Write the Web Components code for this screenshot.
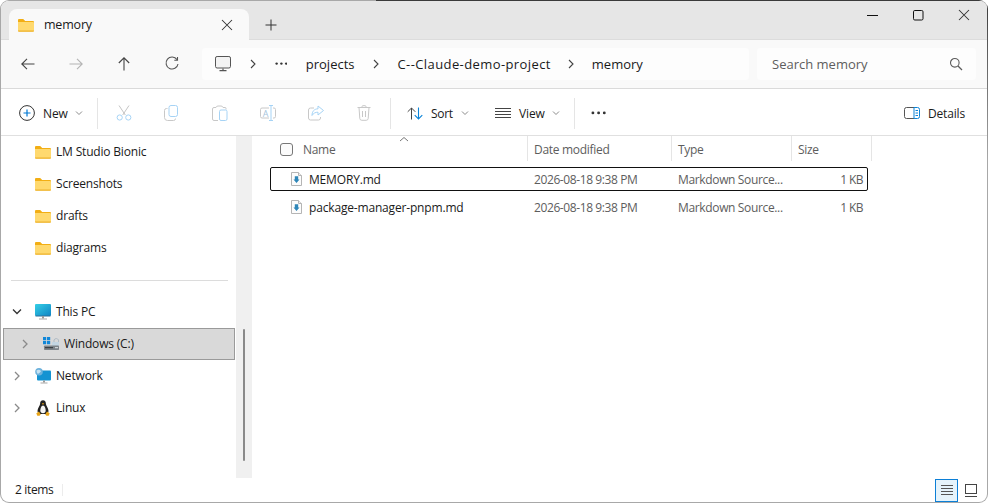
<!DOCTYPE html>
<html lang="en">
<head>
<meta charset="utf-8">
<title>memory</title>
<style>
    html, body { margin: 0; padding: 0; background: #fff; overflow: hidden; }
    body { font: 12px/16px "Open Sans", "Noto Sans", sans-serif; color: #1a1a1a; }
</style>
</head>
<body>
<fe-window>
    <fe-tabbar title-text="memory"></fe-tabbar>
    <fe-addressbar></fe-addressbar>
    <fe-toolbar></fe-toolbar>
    <fe-body>
        <fe-sidebar slot="side">
            <fe-nav-item icon="folder" sub>LM Studio Bionic</fe-nav-item>
            <fe-nav-item icon="folder" sub>Screenshots</fe-nav-item>
            <fe-nav-item icon="folder" sub>drafts</fe-nav-item>
            <fe-nav-item icon="folder" sub>diagrams</fe-nav-item>
            <fe-nav-sep></fe-nav-sep>
            <fe-nav-item icon="pc" chevron="open">This PC</fe-nav-item>
            <fe-nav-item icon="drive" chevron="closed" depth="1" selected>Windows (C:)</fe-nav-item>
            <fe-nav-item icon="network" chevron="closed">Network</fe-nav-item>
            <fe-nav-item icon="linux" chevron="closed">Linux</fe-nav-item>
        </fe-sidebar>
        <fe-filelist slot="main">
            <fe-file-row focused name="MEMORY.md"></fe-file-row>
            <fe-file-row name="package-manager-pnpm.md"></fe-file-row>
        </fe-filelist>
    </fe-body>
    <fe-statusbar></fe-statusbar>
</fe-window>

<script>
const html = String.raw;

// every icon is drawn on its own little canvas, w/h come from the viewBox
const ICONS = {
    folder: [16, 14, `<path d="M0 2a1 1 0 0 1 1-1h4.2l2 2H15a1 1 0 0 1 1 1v1H0z" fill="#f2ae14"/><path d="M0 4h15a1 1 0 0 1 1 1v7.5a1 1 0 0 1-1 1H1a1 1 0 0 1-1-1z" fill="#ffd96e"/><path d="M0 12.6h16v.2a1 1 0 0 1-1 1H1a1 1 0 0 1-1-1z" fill="#eeb22c"/>`],
    back: [16, 16, `<path d="M14.5 8H1.8M7 2.8 1.8 8 7 13.2" fill="none" stroke="#444" stroke-width="1.1"/>`],
    forward: [16, 16, `<path d="M1.5 8h12.7M9 2.8 14.2 8 9 13.2" fill="none" stroke="#b4b4b4" stroke-width="1.1"/>`],
    up: [16, 16, `<path d="M8 14.5V1.8M2.8 7 8 1.8 13.2 7" fill="none" stroke="#444" stroke-width="1.1"/>`],
    refresh: [16, 16, `<path d="M13 3.6A6 6 0 1 0 14 8" fill="none" stroke="#555" stroke-width="1.1"/><path d="M13.5 1v3.2h-3.2" fill="none" stroke="#555" stroke-width="1.1"/>`],
    monitor: [16, 16, `<rect x=".5" y=".5" width="15" height="11.5" rx="1.6" fill="#f3f3f3" stroke="#555"/><path d="M8 12.5v2M4.5 14.7h7" stroke="#555" stroke-width="1.2"/>`],
    search: [14, 14, `<circle cx="5.8" cy="5.8" r="4.3" fill="none" stroke="#5c5c5c" stroke-width="1.1"/><path d="m9 9 4 4" stroke="#5c5c5c" stroke-width="1.2"/>`],
    close: [12, 12, `<path d="m1 1 10 10M11 1 1 11" stroke="#333" stroke-width="1.05"/>`],
    plus: [12, 12, `<path d="M6 .5v11M.5 6h11" stroke="#333" stroke-width="1"/>`],
    min: [11, 11, `<path d="M0 5.5h11" stroke="#111" stroke-width="1"/>`],
    max: [11, 11, `<rect x=".5" y=".5" width="9.5" height="9.5" rx="1.3" fill="none" stroke="#111"/>`],
    chevron: [8, 10, `<path d="m2 1 4 4-4 4" fill="none" stroke="#444" stroke-width="1.1"/>`],
    caret: [8, 6, `<path d="m1 1.5 3 3 3-3" fill="none" stroke="#8a8a8a" stroke-width="1"/>`],
    newItem: [16, 16, `<circle cx="8" cy="8" r="7.4" fill="#fff" stroke="#333" stroke-width="1"/><path d="M8 4.5v7M4.5 8h7" stroke="#0078d4" stroke-width="1.2"/>`],
    cut: [16, 16, `<path d="M3 .5 9.3 10M13 .5 6.7 10" stroke="#c4c4c4" stroke-width="1" fill="none"/><circle cx="3.7" cy="12.5" r="2.6" fill="none" stroke="#a6d3f5"/><circle cx="12.3" cy="12.5" r="2.6" fill="none" stroke="#a6d3f5"/>`],
    copy: [16, 16, `<path d="M3.5 3.5h-1a2 2 0 0 0-2 2v7a3 3 0 0 0 3 3h6a2 2 0 0 0 2-2" fill="none" stroke="#c8c8c8"/><rect x="5" y=".5" width="8.5" height="11" rx="2" fill="#fff" stroke="#a6d3f5"/>`],
    paste: [16, 16, `<path d="M4 2.5H2a1.500 1.500 0 0 0-1.500 1.500v10a1.500 1.500 0 0 0 1.500 1.500h4M4 2.500a2 2 0 0 1 2-1.500h3a2 2 0 0 1 2 1.500" fill="none" stroke="#c8c8c8"/><path d="M11 2.500h2a1 1 0 0 1 1 1v1" fill="none" stroke="#c8c8c8"/><rect x="7.500" y="5" width="7.500" height="10.500" rx="1.500" fill="#fff" stroke="#a6d3f5"/>`],
    rename: [16, 16, `<path d="M9 3H2a1.500 1.500 0 0 0-1.500 1.500v7A1.500 1.500 0 0 0 2 13h7M13 3h1a1.500 1.500 0 0 1 1.500 1.500v7A1.500 1.500 0 0 1 14 13h-1" fill="none" stroke="#c8c8c8"/><path d="M9 .5h4M11 .5v15M9 15.500h4" stroke="#a6d3f5" fill="none"/><text x="5.500" y="11.500" text-anchor="middle" font-size="9" font-family="Open Sans, sans-serif" fill="#a6c4dc">A</text>`],
    share: [16, 16, `<path d="M6 3H2.500A2 2 0 0 0 .5 5v8a2 2 0 0 0 2 2h8a2 2 0 0 0 2-2v-1" fill="none" stroke="#c8c8c8"/><path d="M10 1v2.800C6 4 4 6.500 4 10.500 5.500 8 7.500 7.200 10 7.200V10l5.500-4.500z" fill="#fff" stroke="#a6d3f5"/>`],
    trash: [14, 16, `<path d="M.5 2.500h13M5 2.500V1.700A1 1 0 0 1 6 .7h2a1 1 0 0 1 1 1v.8M2 2.500l.8 11a2 2 0 0 0 2 1.800h4.400a2 2 0 0 0 2-1.800l.8-11M5.500 6v6M8.500 6v6" fill="none" stroke="#c8c8c8"/>`],
    sort: [17, 13, `<path d="M4.500 12.500V1M.7 4.800 4.500 1l3.800 3.800" fill="none" stroke="#444"/><path d="M11.500.5V12M7.700 8.200l3.800 3.800 3.800-3.800" fill="none" stroke="#0c84d8" stroke-width="1.100"/>`],
    view: [16, 11, `<path d="M0 .5h16M0 3.500h16M0 6.500h16M0 9.500h16" stroke="#444"/>`],
    dots: [16, 4, `<circle cx="2" cy="2" r="1.500" fill="#333"/><circle cx="8" cy="2" r="1.500" fill="#333"/><circle cx="14" cy="2" r="1.500" fill="#333"/>`],
    details: [16, 12, `<path d="M10 .5H2.500a2 2 0 0 0-2 2v7a2 2 0 0 0 2 2H10" fill="none" stroke="#555"/><path d="M10 .5h3.500a2 2 0 0 1 2 2v7a2 2 0 0 1-2 2H10z" fill="#fff" stroke="#0c84d8"/><path d="M11.500 3.500h2.500M11.500 6h2.500M11.500 8.500h2.500" stroke="#0c84d8"/>`],
    pc: [16, 16, `<defs><linearGradient id="scr" x1="0" y1="0" x2="1" y2="1"><stop offset="0" stop-color="#35cfe6"/><stop offset="1" stop-color="#0e84c4"/></linearGradient></defs><rect x="0" y="0" width="16" height="12" rx="1" fill="url(#scr)"/><path d="M.5 12h15" stroke="#2b6f9a"/><path d="M8 12v2.500" stroke="#9a9a9a" stroke-width="2"/><path d="M4 15h8" stroke="#a8a8a8" stroke-width="1.200"/>`],
    drive: [16, 14, `<path d="M0 0h3.200v3.200H0zM4 0h3.200v3.200H4zM0 4h3.200v3.200H0zM4 4h3.200v3.200H4z" fill="#1187d8"/><path d="M11 5V3a2.500 2.500 0 0 1 4.500 0v2" fill="none" stroke="#aebbc4"/><rect x="9" y="5" width="7" height="4" fill="#c4d6e2"/><rect x="1" y="8.500" width="15" height="4.500" rx=".8" fill="#7d8388"/><path d="M2 10.700h8" stroke="#2c2f33"/><path d="M12 10.700h3" stroke="#dfe5e9"/>`],
    network: [16, 16, `<rect x="2" y="2.500" width="14" height="10" rx="1" fill="#1493d2"/><path d="M9 12.500v2" stroke="#9a9a9a" stroke-width="2"/><path d="M5.500 15h7" stroke="#a8a8a8" stroke-width="1.200"/><circle cx="4" cy="3.800" r="3.800" fill="#6db2dc"/><path d="M1.500 2.500c1.500-1 3-1 4.500.5-.5 1.500-2 2-3 3-1-1-1.500-2-1.500-3.500z" fill="#c7e2f2"/>`],
    linux: [14, 16, `<path d="M7 .3c-2 0-2.900 1.500-2.900 3.400 0 2-2.600 4.300-2.600 7.300 0 1.500 1 2.600 2 3h7c1-.4 2-1.500 2-3 0-3-2.600-5.300-2.600-7.300C9.900 1.800 9 .3 7 .3z" fill="#222"/><path d="M7 5.500c-1.600 0-2.700 3-2.700 5.300 0 1.300 1 2.500 2.700 2.500s2.700-1.200 2.700-2.500C9.700 8.500 8.600 5.500 7 5.500z" fill="#f4f4f4"/><path d="M5.800 3.700 7 3l1.200.7L7 4.800z" fill="#e8a417"/><path d="M.3 13.200 3 11.500l1.800 2.900-1.300 1.300H1.300zM13.700 13.200 11 11.500l-1.800 2.900 1.300 1.300h2.200z" fill="#e8a417"/>`],
    doc: [11, 14, `<path d="M.5.500h7l3 3v10H.5z" fill="#fcfcfc" stroke="#b5b5b5"/><path d="M7.500.500v3h3" fill="#eee" stroke="#b5b5b5"/><path d="M3.800 4.200h3.400v3.400h1.300L5.500 11 2.500 7.600h1.300z" fill="#2e86b8"/>`],
    listView: [12, 10, `<path d="M0 .5h12M0 3.500h12M0 6.500h12M0 9.500h12" stroke="#555" stroke-width="1"/>`],
    tileView: [12, 13, `<rect x=".5" y=".5" width="11" height="9" fill="#fff" stroke="#444"/><path d="M0 12.500h12" stroke="#444"/>`]
};

class FeIcon extends HTMLElement {
    constructor() {
        super();
        const shadowRoot = this.attachShadow({ mode: 'open' });
        const [w, h, body] = ICONS[this.getAttribute('name')];
        shadowRoot.innerHTML = html`
            <style>
                :host { display: inline-flex; flex: none; }
                svg { display: block; }
            </style>
            <svg width="${w}" height="${h}" viewBox="0 0 ${w} ${h}">${body}</svg>
        `;
    }
}

class FeWindow extends HTMLElement {
    constructor() {
        super();
        const shadowRoot = this.attachShadow({ mode: 'open' });
        shadowRoot.innerHTML = html`
            <style>
                :host {
                    display: block;
                    width: 988px;
                    height: 503px;
                    box-sizing: border-box;
                    padding: 1px;
                    border-radius: 9px;
                    background:
                        linear-gradient(#3a3a3a, #3a3a3a) right top / 612px 1px no-repeat,
                        linear-gradient(#3a3a3a, #a8a8a8) right top / 1px 160px no-repeat,
                        #a8a8a8;
                }
                .frame {
                    height: 100%;
                    display: flex;
                    flex-direction: column;
                    background: #fff;
                    border-radius: 8px;
                    overflow: hidden;
                }
            </style>
            <div class="frame"><slot></slot></div>
        `;
    }
}

class FeTabbar extends HTMLElement {
    constructor() {
        super();
        const shadowRoot = this.attachShadow({ mode: 'open' });
        shadowRoot.innerHTML = html`
            <style>
                :host {
                    display: flex;
                    flex: none;
                    height: 39px;
                    box-sizing: border-box;
                    background: #e6e6e6;
                    border-bottom: 1px solid #dcdcdc;
                    padding-left: 8px;
                }
                .tab {
                    width: 240px;
                    height: 31px;
                    margin-top: 8px;
                    box-sizing: border-box;
                    padding: 0 16px 0 9px;
                    display: flex;
                    align-items: center;
                    background: #f9f9f9;
                    border-radius: 8px 8px 0 0;
                    position: relative;
                }
                .tab span { margin-left: 10px; flex: 1; font-size: 12.5px; letter-spacing: -.2px; padding-top: 1px; color: #1a1a1a; }
                .new { width: 44px; margin-top: 8px; height: 31px; display: flex; align-items: center; justify-content: center; }
                .controls { margin-left: auto; display: flex; height: 30px; margin-top: -1px; }
                .controls div { width: 46px; display: flex; align-items: center; justify-content: center; }
            </style>
            <div class="tab">
                <fe-icon name="folder"></fe-icon>
                <span>${this.getAttribute('title-text')}</span>
                <fe-icon name="close"></fe-icon>
            </div>
            <div class="new"><fe-icon name="plus"></fe-icon></div>
            <div class="controls">
                <div><fe-icon name="min"></fe-icon></div>
                <div><fe-icon name="max"></fe-icon></div>
                <div><fe-icon name="close"></fe-icon></div>
            </div>
        `;
    }
}

class FeAddressbar extends HTMLElement {
    constructor() {
        super();
        const shadowRoot = this.attachShadow({ mode: 'open' });
        shadowRoot.innerHTML = html`
            <style>
                :host {
                    display: flex;
                    flex: none;
                    height: 49px;
                    box-sizing: border-box;
                    align-items: center;
                    background: #f9f9f9;
                    border-bottom: 1px solid #dadada;
                    padding: 0 11px 1px 3px;
                }
                .nav { width: 48px; display: flex; justify-content: center; }
                .crumbs {
                    margin-left: 6px;
                    width: 547px;
                    height: 32px;
                    box-sizing: border-box;
                    display: flex;
                    align-items: center;
                    background: #fdfdfd;
                    border-radius: 4px;
                    padding-left: 13px;
                    font-size: 13px;
                    color: #1a1a1a;
                }
                .sep { width: 8px; display: flex; justify-content: center; }
                .more { margin-left: 22px; margin-right: 23px; }
                .long { letter-spacing: .4px; }
                .search {
                    margin-left: 8px;
                    width: 219px;
                    height: 32px;
                    box-sizing: border-box;
                    display: flex;
                    align-items: center;
                    justify-content: space-between;
                    background: #fdfdfd;
                    border-radius: 4px;
                    padding: 0 13px 0 15px;
                    font-size: 13px;
                    color: #5d5d5d;
                }
            </style>
            <div class="nav"><fe-icon name="back"></fe-icon></div>
            <div class="nav"><fe-icon name="forward"></fe-icon></div>
            <div class="nav"><fe-icon name="up"></fe-icon></div>
            <div class="nav"><fe-icon name="refresh"></fe-icon></div>
            <div class="crumbs">
                <fe-icon name="monitor"></fe-icon>
                <span class="sep" style="margin-left:18px"><fe-icon name="chevron"></fe-icon></span>
                <fe-icon class="more" name="dots" style="zoom:.8"></fe-icon>
                <span>projects</span>
                <span class="sep" style="margin:0 18px 0 17px"><fe-icon name="chevron"></fe-icon></span>
                <span class="long">C--Claude-demo-project</span>
                <span class="sep" style="margin:0 17px 0 16px"><fe-icon name="chevron"></fe-icon></span>
                <span>memory</span>
            </div>
            <div class="search"><span>Search memory</span><fe-icon name="search"></fe-icon></div>
        `;
    }
}

class FeToolbar extends HTMLElement {
    constructor() {
        super();
        const shadowRoot = this.attachShadow({ mode: 'open' });
        shadowRoot.innerHTML = html`
            <style>
                :host {
                    display: flex;
                    flex: none;
                    height: 47px;
                    box-sizing: border-box;
                    align-items: center;
                    background: #fff;
                    border-bottom: 1px solid #e0e0e0;
                    padding: 2px 22px 0 18px;
                    font-size: 12px;
                    color: #1a1a1a;
                }
                .sep { width: 1px; height: 31px; background: #e5e5e5; flex: none; }
                .cmd { display: flex; align-items: center; }
                .icon { width: 48px; display: flex; justify-content: center; flex: none; }
                .cmd span { margin: 0 7px 0 8px; padding-top: 1px; letter-spacing: -.15px; }
                .cmd span.tight { margin: 0 8px 0 7px; letter-spacing: -.3px; }
            </style>
            <div class="cmd" style="width:78px"><fe-icon name="newItem"></fe-icon><span>New</span><fe-icon name="caret"></fe-icon></div>
            <div class="sep"></div>
            <div class="icon" style="margin-left:2px"><fe-icon name="cut"></fe-icon></div>
            <div class="icon"><fe-icon name="copy"></fe-icon></div>
            <div class="icon"><fe-icon name="paste"></fe-icon></div>
            <div class="icon"><fe-icon name="rename"></fe-icon></div>
            <div class="icon"><fe-icon name="share"></fe-icon></div>
            <div class="icon"><fe-icon name="trash"></fe-icon></div>
            <div class="sep" style="margin-left:2px"></div>
            <div class="cmd" style="margin-left:16px;width:88px"><fe-icon name="sort"></fe-icon><span class="tight">Sort</span><fe-icon name="caret"></fe-icon></div>
            <div class="cmd" style="width:69px"><fe-icon name="view"></fe-icon><span>View</span><fe-icon name="caret"></fe-icon></div>
            <div class="sep" style="margin-left:10px"></div>
            <div class="icon"><fe-icon name="dots" style="zoom:.95"></fe-icon></div>
            <div class="cmd" style="margin-left:auto"><fe-icon name="details"></fe-icon><span style="margin-right:0">Details</span></div>
        `;
    }
}

class FeBody extends HTMLElement {
    constructor() {
        super();
        const shadowRoot = this.attachShadow({ mode: 'open' });
        shadowRoot.innerHTML = html`
            <style>
                :host { display: flex; flex: 1; min-height: 0; }
                .track { width: 16px; flex: none; background: #f0f0f0; box-sizing: border-box; padding: 193px 0 0 7px; }
                .thumb { width: 2px; height: 132px; background: #8a8a8a; border-radius: 1px; }
            </style>
            <slot name="side"></slot>
            <div class="track"><div class="thumb"></div></div>
            <slot name="main"></slot>
        `;
    }
}

class FeSidebar extends HTMLElement {
    constructor() {
        super();
        const shadowRoot = this.attachShadow({ mode: 'open' });
        shadowRoot.innerHTML = html`
            <style>
                :host { display: block; width: 235px; flex: none; font-size: 12px; letter-spacing: -.18px; }
            </style>
            <slot></slot>
        `;
    }
}

class FeNavItem extends HTMLElement {
    constructor() {
        super();
        const shadowRoot = this.attachShadow({ mode: 'open' });
        const depth = Number(this.getAttribute('depth') || 0);
        const chevron = this.getAttribute('chevron');
        const arrow = chevron === 'open'
            ? `<svg width="10" height="8" viewBox="0 0 10 8"><path d="m1 1.500 4 4 4-4" fill="none" stroke="#333" stroke-width="1.300"/></svg>`
            : chevron === 'closed'
                ? `<svg width="8" height="10" viewBox="0 0 8 10"><path d="m2 1 4 4-4 4" fill="none" stroke="#8a8a8a" stroke-width="1.300"/></svg>`
                : '';
        shadowRoot.innerHTML = html`
            <style>
                :host {
                    display: flex;
                    align-items: center;
                    height: 32px;
                    box-sizing: border-box;
                    margin: 0 0 0 2px;
                    width: 232px;
                    border: 1px solid transparent;
                    padding-left: ${5 + depth * 8}px;
                    color: #1a1a1a;
                }
                :host([selected]) { background: #d9d9d9; border-color: #9a9a9a; }
                .arrow { width: 16px; display: flex; justify-content: center; flex: none; margin-right: 10px; }
                .icon { width: 16px; display: flex; justify-content: center; flex: none; margin-right: 5px; }
            </style>
            <span class="arrow">${arrow}</span>
            <span class="icon"><fe-icon name="${this.getAttribute('icon')}"></fe-icon></span>
            <slot></slot>
        `;
    }
}

class FeNavSep extends HTMLElement {
    constructor() {
        super();
        const shadowRoot = this.attachShadow({ mode: 'open' });
        shadowRoot.innerHTML = html`
            <style>
                :host { display: flex; align-items: center; height: 32px; padding: 0 8px 0 10px; }
                div { flex: 1; height: 1px; background: #dcdcdc; }
            </style>
            <div></div>
        `;
    }
}

class FeFilelist extends HTMLElement {
    constructor() {
        super();
        const shadowRoot = this.attachShadow({ mode: 'open' });
        shadowRoot.innerHTML = html`
            <style>
                :host {
                    display: block;
                    flex: 1;
                    position: relative;
                    padding-left: 18px;
                    font-size: 12px;
                }
                .head {
                    display: grid;
                    grid-template-columns: 257px 144px 120px 80px;
                    height: 25px;
                    margin: 0 0 6px 1px;
                    color: #5d5d5d;
                    letter-spacing: -.3px;
                }
                .head div {
                    display: flex;
                    align-items: center;
                    box-sizing: border-box;
                    padding-left: 6px;
                    padding-top: 1px;
                    border-right: 1px solid #e5e5e5;
                }
                .head span.t { padding-top: 1px; }
                .head .name { padding-left: 9px; }
                .check {
                    width: 13px;
                    height: 13px;
                    box-sizing: border-box;
                    border: 1px solid #777;
                    border-radius: 3px;
                    margin-right: 10px;
                    background: #fbfbfb;
                }
                .rows { display: flex; flex-direction: column; gap: 4px; }
                .caret { position: absolute; left: 147px; top: 0; }
            </style>
            <div class="head">
                <div class="name"><span class="check"></span><span class="t">Name</span></div>
                <div><span class="t">Date modified</span></div>
                <div><span class="t">Type</span></div>
                <div><span class="t">Size</span></div>
            </div>
            <svg class="caret" width="10" height="6" viewBox="0 0 10 6"><path d="m1 5 4-3.500L9 5" fill="none" stroke="#777"/></svg>
            <div class="rows"><slot></slot></div>
        `;
    }
}

class FeFileRow extends HTMLElement {
    constructor() {
        super();
        const shadowRoot = this.attachShadow({ mode: 'open' });
        shadowRoot.innerHTML = html`
            <style>
                :host {
                    display: grid;
                    grid-template-columns: 257px 144px 120px 75px;
                    align-items: center;
                    width: 598px;
                    height: 24px;
                    box-sizing: border-box;
                    padding-top: 2px;
                    border: 1px solid transparent;
                    border-radius: 2px;
                    color: #5d5d5d;
                }
                :host([focused]) { border-color: #111; }
                .name { display: flex; align-items: center; padding-left: 20px; color: #1a1a1a; letter-spacing: -.17px; }
                .name fe-icon { margin: -2px 7px 0 0; }
                .date, .type { padding-left: 6px; }
                .date { letter-spacing: -.4px; }
                .type { letter-spacing: -.35px; }
                .size { text-align: right; padding-right: 4px; letter-spacing: -.6px; }
            </style>
            <div class="name"><fe-icon name="doc"></fe-icon>${this.getAttribute('name')}</div>
            <div class="date">2026-08-18 9:38 PM</div>
            <div class="type">Markdown Source...</div>
            <div class="size">1 KB</div>
        `;
    }
}

class FeStatusbar extends HTMLElement {
    constructor() {
        super();
        const shadowRoot = this.attachShadow({ mode: 'open' });
        shadowRoot.innerHTML = html`
            <style>
                :host {
                    display: flex;
                    flex: none;
                    height: 24px;
                    box-sizing: border-box;
                    align-items: center;
                    padding-left: 14px;
                    font-size: 12px;
                    letter-spacing: -.35px;
                    color: #1a1a1a;
                }
                .sep { width: 1px; height: 12px; background: #ececec; margin-left: 9px; }
                .views { margin-left: auto; display: flex; align-items: center; height: 100%; }
                .on {
                    width: 23px;
                    height: 23px;
                    box-sizing: border-box;
                    display: flex;
                    align-items: center;
                    justify-content: center;
                    background: #e5f3fb;
                    border: 1.500px solid #0c7fd6;
                }
                .off { width: 26px; display: flex; justify-content: center; margin-right: 3px; }
            </style>
            <span>2 items</span>
            <div class="sep"></div>
            <div class="views">
                <div class="on"><fe-icon name="listView"></fe-icon></div>
                <div class="off"><fe-icon name="tileView"></fe-icon></div>
            </div>
        `;
    }
}

customElements.define('fe-icon', FeIcon);
customElements.define('fe-window', FeWindow);
customElements.define('fe-tabbar', FeTabbar);
customElements.define('fe-addressbar', FeAddressbar);
customElements.define('fe-toolbar', FeToolbar);
customElements.define('fe-body', FeBody);
customElements.define('fe-sidebar', FeSidebar);
customElements.define('fe-nav-item', FeNavItem);
customElements.define('fe-nav-sep', FeNavSep);
customElements.define('fe-filelist', FeFilelist);
customElements.define('fe-file-row', FeFileRow);
customElements.define('fe-statusbar', FeStatusbar);
</script>
</body>
</html>
